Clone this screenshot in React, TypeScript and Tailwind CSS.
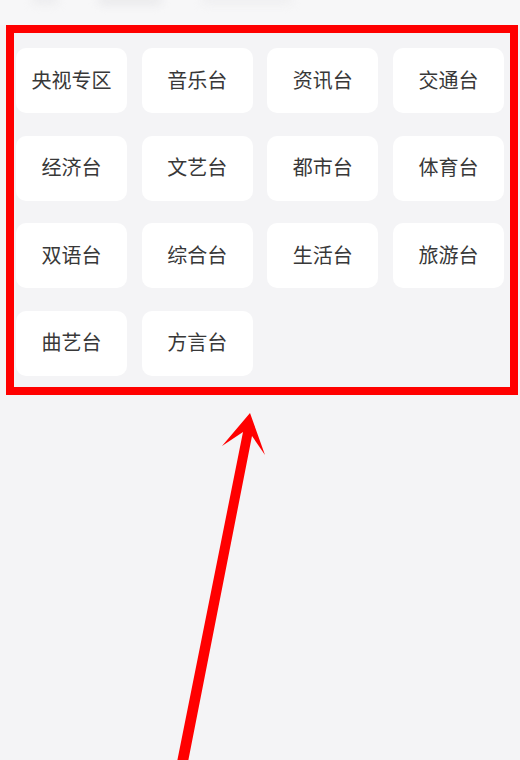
import React from 'react';

const channels = [
  '央视专区', '音乐台', '资讯台', '交通台',
  '经济台', '文艺台', '都市台', '体育台',
  '双语台', '综合台', '生活台', '旅游台',
  '曲艺台', '方言台',
];

const App = () => {
  return (
    <div
      className="relative w-[520px] h-[760px] overflow-hidden bg-[#f4f4f6]"
      style={{ fontFamily: '"Noto Sans", "Noto Sans CJK SC", sans-serif' }}
    >
      {/* faded header remains */}
      <div className="h-[25px] bg-[#f7f7f8] flex gap-10 px-8">
        <div className="w-[26px] h-[8px] -mt-1 rounded-full bg-[#ebebed] blur-[4px]" />
        <div className="w-[64px] h-[9px] -mt-1 rounded-full bg-[#e9e9eb] blur-[4px]" />
        <div className="w-[90px] h-[8px] -mt-1 rounded-full bg-[#eeeef0] blur-[4px]" />
      </div>

      {/* channel grid */}
      <div className="pt-[23px] pl-4 w-[504px]">
        <div className="grid grid-cols-4 gap-x-[14.67px] gap-y-[22.67px]">
          {channels.map((name) => (
            <div
              key={name}
              className="h-[65px] rounded-[10px] bg-white flex items-center justify-center text-[20px] text-[#383838]"
            >
              {name}
            </div>
          ))}
        </div>
      </div>

      {/* annotation box */}
      <div className="absolute left-[6px] top-[25px] w-[512px] h-[370px] border-[8px] border-[#ff0000] pointer-events-none" />

      {/* annotation arrow */}
      <svg
        className="absolute left-0 top-0 pointer-events-none"
        width="520"
        height="760"
        viewBox="0 0 520 760"
      >
        <polygon
          fill="#ff0000"
          points="250,413 222,446 243,432 177,762 188,762 252,436 265,455"
        />
      </svg>
    </div>
  );
};

export default App;
